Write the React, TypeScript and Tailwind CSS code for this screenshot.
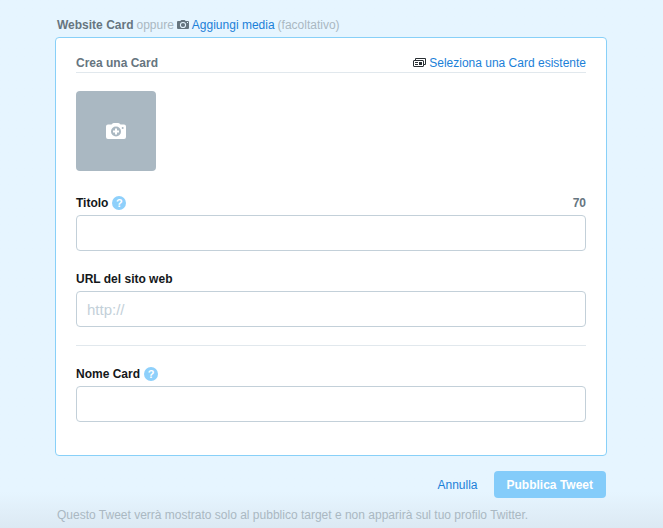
import type { ReactNode } from 'react'

const CameraIcon = () => (
  <svg viewBox="0 0 12 10" className="h-[10px] w-3 shrink-0" aria-hidden="true">
    <path
      fill="#66757f"
      fillRule="evenodd"
      d="M1 1h2.400L4 .3Q4.200 0 4.600 0h2.800q.4 0 .6.3l.6.7H11q1 0 1 1v6q0 1-1 1H1Q0 9 0 8V2q0-1 1-1ZM6 1.900a3.100 3.100 0 1 0 0 6.200 3.100 3.100 0 0 0 0-6.200Zm0 1a2.100 2.100 0 1 1 0 4.200 2.100 2.100 0 0 1 0-4.200Zm4-.9v1h1V2Z"
    />
    <circle cx="6" cy="5" r="1" fill="#66757f" />
  </svg>
)

const CardsIcon = () => (
  <svg viewBox="0 0 13 10" className="h-[10px] w-[13px] shrink-0" aria-hidden="true">
    <path fill="none" stroke="#292f33" d="M2.500 2V.5h10v6H11" />
    <rect x=".5" y="2.500" width="10" height="6" rx=".5" fill="#fff" stroke="#292f33" />
    <path fill="#292f33" d="M2 4h3v1H2zM2 6h3v1H2zM6 4h3v3H6z" />
  </svg>
)

const AddPhotoIcon = () => (
  <svg viewBox="0 0 20 16" className="h-4 w-5" aria-hidden="true">
    <path
      fill="#fff"
      d="M2 1.500h3.500l1-1Q7 0 7.700 0h4.600q.7 0 1.200.5l1 1H18q2 0 2 2V14q0 2-2 2H2q-2 0-2-2V3.500q0-2 2-2Z"
    />
    <circle cx="10" cy="8.500" r="5" fill="#aab8c2" />
    <path fill="#fff" d="M9 5.500h2v2h2v2h-2v2H9v-2H7v-2h2z" />
    <circle cx="16.700" cy="5" r="1" fill="#aab8c2" />
  </svg>
)

const Help = () => (
  <button
    type="button"
    className="flex size-[14px] items-center justify-center rounded-full bg-[#8ed0fb] text-[11px] leading-none font-bold text-white"
  >
    ?
  </button>
)

type FieldProps = {
  id: string
  label: string
  placeholder?: string
  help?: boolean
  extra?: ReactNode
}

const Field = ({ id, label, placeholder, help, extra }: FieldProps) => (
  <div>
    <div className="mb-0.5 flex h-5 items-center gap-1">
      <label htmlFor={id} className="font-bold text-[#14171a]">
        {label}
      </label>
      {help && <Help />}
      {extra}
    </div>
    <input
      id={id}
      type="text"
      placeholder={placeholder}
      className="block h-9 w-full rounded border border-[#c3d0d9] bg-white px-2.5 text-[15px] outline-none placeholder:text-[#c3d0d9]"
    />
  </div>
)

const App = () => (
  <main className="min-h-screen bg-[#e6f5ff] bg-linear-to-t from-[#dce9f3] to-[#e6f5ff] to-[36px] px-[57px] pt-[15px] font-['Liberation_Sans',Arial,sans-serif] text-xs leading-5 text-[#66757f]">
    <form onSubmit={(e) => e.preventDefault()}>
      <div className="mb-0.5 flex h-5 items-center gap-[3px] text-[#aab8c2]">
        <span className="font-bold text-[#66757f]">Website Card</span>
        <span>oppure</span>
        <CameraIcon />
        <a href="#media" className="text-[#1b80d8]">
          Aggiungi media
        </a>
        <span>(facoltativo)</span>
      </div>

      <section className="-mr-px -ml-0.5 rounded border border-[#88d0f8] bg-white px-5 pt-4 pb-[33px]">
        <div className="flex items-center justify-between border-b border-[#e1e8ed] leading-[18px]">
          <h2 className="font-bold">Crea una Card</h2>
          <a href="#cards" className="flex items-center gap-[3px] text-[#1b80d8]">
            <CardsIcon />
            Seleziona una Card esistente
          </a>
        </div>

        <button
          type="button"
          aria-label="Aggiungi immagine"
          className="mt-[18px] mb-[22px] flex size-20 items-center justify-center rounded bg-[#aab8c2]"
        >
          <AddPhotoIcon />
        </button>

        <div className="flex flex-col gap-[18px]">
          <Field
            id="title"
            label="Titolo"
            help
            extra={<span className="ml-auto font-bold">70</span>}
          />
          <Field id="url" label="URL del sito web" placeholder="http://" />
          <hr className="border-[#e1e8ed]" />
          <Field id="name" label="Nome Card" help />
        </div>
      </section>

      <div className="mt-[15px] flex items-center justify-end gap-4">
        <button type="button" className="text-[#1b80d8]">
          Annulla
        </button>
        <button
          type="submit"
          className="h-[27px] rounded bg-[#84ccfa] px-[13px] font-bold text-white"
        >
          Pubblica Tweet
        </button>
      </div>
      <p className="mt-[7px] text-[#aab8c2]">
        Questo Tweet verrà mostrato solo al pubblico target e non apparirà sul tuo profilo Twitter.
      </p>
    </form>
  </main>
)

export default App
